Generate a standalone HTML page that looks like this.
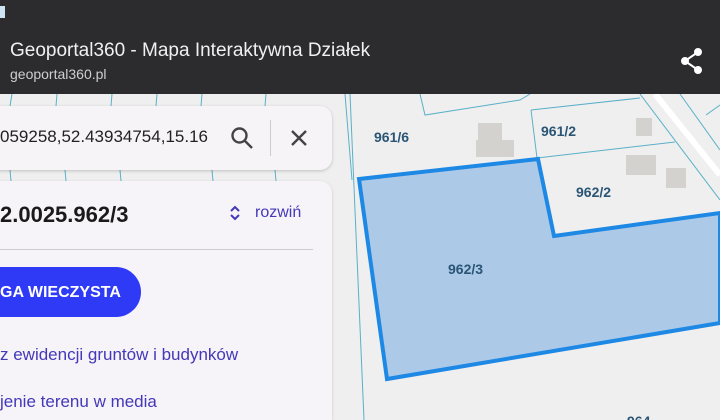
<!DOCTYPE html>
<html style="width:720px;height:420px;overflow:hidden"><head><style>
body{margin:0;width:720px;height:420px;overflow:hidden;position:relative;background:#efefef;font-family:"Liberation Sans",sans-serif}
.hdr{position:absolute;left:0;top:0;width:720px;height:94px;background:#2c2c2e;color:#eee}
.t1{position:absolute;left:10px;top:40px;font-size:19px;color:#f0f0f0}
.t2{position:absolute;left:10px;top:66px;font-size:14px;color:#cfcfcf}
.search{position:absolute;left:-12px;top:106px;width:344px;height:64px;background:#f7f4f8;border-radius:12px;box-shadow:0 1px 3px rgba(0,0,0,.2)}
.panel{position:absolute;left:-12px;top:181px;width:344px;height:239px;background:#f6f3f9;border-radius:12px 12px 0 0;box-shadow:0 1px 3px rgba(0,0,0,.15)}
.lnk{position:absolute;left:0;color:#4338b8;font-size:17px}
</style></head><body>
<svg style="position:absolute;left:0;top:0" width="720" height="420">
<g stroke="#5ab0c8" stroke-width="1" fill="none">
<path d="M350 94 L364 420"/><path d="M420 94 L425 115 L520 100 L530 94"/>
<path d="M531 110 L640 98"/><path d="M531 110 L537 158"/><path d="M537 158 L675 142"/>
<path d="M640 94 L720 200"/><path d="M680 94 L720 150"/><path d="M706 115 L720 105"/>
<path d="M12 94 L10 106 M57 94 L56 106 M112 94 L111 106 M157 94 L156 106 M202 94 L201 106 M266 94 L265 106 M345 94 L352 180"/>
<path d="M10 170 L11 181 M65 170 L66 181 M120 170 L121 181 M212 170 L213 181 M275 170 L276 181"/>
</g>
<path d="M655 94 L720 175" stroke="#fff" stroke-width="6"/>
<g fill="#d4d2cf"><rect x="478" y="123" width="24" height="22"/><rect x="476" y="140" width="38" height="17"/><rect x="636" y="118" width="16" height="18"/><rect x="626" y="155" width="30" height="20"/><rect x="666" y="168" width="20" height="20"/></g>
<polygon points="359,179 538,159 554,236 720,213 720,323 387,379" fill="#adc9e8" stroke="#1e88e5" stroke-width="4"/>
<g font-family="Liberation Sans,sans-serif" font-weight="bold" font-size="14" fill="#2a5575">
<text x="374" y="142">961/6</text><text x="541" y="136">961/2</text><text x="576" y="197">962/2</text><text x="448" y="274">962/3</text><text x="627" y="426">964</text></g>
</svg>
<div class="hdr"><div style="position:absolute;left:0;top:6px;width:5px;height:12px;background:#cfe3f5"></div>
<div class="t1">Geoportal360 - Mapa Interaktywna Działek</div><div class="t2">geoportal360.pl</div>
<svg style="position:absolute;left:680px;top:48px" width="24" height="26" viewBox="0 0 24 26" fill="#fff" stroke="#fff" stroke-width="2"><circle cx="18" cy="4" r="3"/><circle cx="5" cy="13" r="3"/><circle cx="18" cy="22" r="3"/><path d="M18 4 L5 13 L18 22" fill="none"/></svg></div>
<div class="search"></div>
<div style="position:absolute;left:0;top:127px;font-size:17px;color:#222">059258,52.43934754,15.16</div>
<svg style="position:absolute;left:230px;top:126px" width="24" height="24" fill="none" stroke="#444" stroke-width="2.4"><circle cx="9.5" cy="9.5" r="7"/><path d="M14.5 14.5 L22 22"/></svg>
<div style="position:absolute;left:270px;top:120px;width:1px;height:36px;background:#ccc"></div>
<svg style="position:absolute;left:290px;top:129px" width="18" height="18" stroke="#444" stroke-width="2.4"><path d="M2 2 L16 16 M16 2 L2 16"/></svg>
<div class="panel"></div>
<div style="position:absolute;left:0;top:202px;font-size:22px;font-weight:bold;color:#1a1a1a">2.0025.962/3</div>
<svg style="position:absolute;left:229px;top:205px" width="12" height="16" fill="none" stroke="#4338b8" stroke-width="2"><path d="M2 6 L6 2 L10 6 M2 10 L6 14 L10 10"/></svg>
<div style="position:absolute;left:255px;top:204px;font-size:16px;color:#4338b8">rozwiń</div>
<div style="position:absolute;left:0;top:249px;width:313px;height:1px;background:#ccc"></div>
<div style="position:absolute;left:-30px;top:267px;width:171px;height:50px;border-radius:25px;background:#2f3af7"></div>
<div style="position:absolute;left:0;top:284px;color:#fff;font-size:16px;font-weight:bold">GA WIECZYSTA</div>
<div class="lnk" style="top:345px">z ewidencji gruntów i budynków</div>
<div class="lnk" style="top:392px">jenie terenu w media</div>
</body></html>
